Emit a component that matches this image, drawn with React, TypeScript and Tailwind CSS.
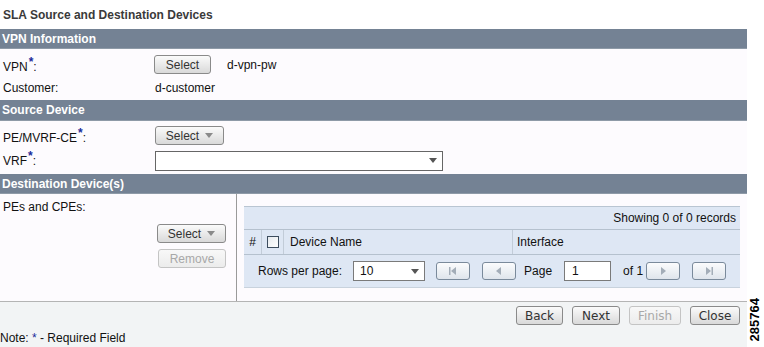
import React from 'react'

const Star: React.FC = () => (
  <span className="relative top-[-5px] ml-[1px] text-[12px] font-bold text-[#1a2a9a]">*</span>
)

const Caret: React.FC = () => (
  <svg width="8" height="5" viewBox="0 0 8 5" className="ml-[6px]">
    <path d="M0 0 L8 0 L4 5 Z" fill="#8a8a8a" />
  </svg>
)

const Btn: React.FC<{ label: string; w: string; caret?: boolean; disabled?: boolean }> = ({
  label,
  w,
  caret,
  disabled,
}) => (
  <div
    className={`flex h-[19px] ${w} items-center justify-center rounded-[3px] border bg-gradient-to-b text-[12px] ${
      disabled
        ? 'border-[#c4c4c4] from-[#f8f8f8] to-[#ececec] text-[#a8a8a8]'
        : 'border-[#8a8a8a] from-[#fbfbfb] to-[#d9d9d9] text-[#333]'
    }`}
  >
    <span>{label}</span>
    {caret && <Caret />}
  </div>
)

const NavBtn: React.FC<{ kind: 'first' | 'prev' | 'next' | 'last' }> = ({ kind }) => (
  <div className="flex h-[18px] w-[34px] items-center justify-center rounded-[3px] border border-[#7a8a9b] bg-gradient-to-b from-[#fbfcfd] to-[#dfe5ec]">
    <svg width="10" height="8" viewBox="0 0 10 8">
      {kind === 'first' && (
        <>
          <rect x="1" y="0" width="1.5" height="8" fill="#a3adb8" />
          <path d="M8 0 L8 8 L3 4 Z" fill="#a3adb8" />
        </>
      )}
      {kind === 'prev' && <path d="M7 0 L7 8 L2 4 Z" fill="#a3adb8" />}
      {kind === 'next' && <path d="M3 0 L3 8 L8 4 Z" fill="#a3adb8" />}
      {kind === 'last' && (
        <>
          <path d="M2 0 L2 8 L7 4 Z" fill="#a3adb8" />
          <rect x="7.5" y="0" width="1.5" height="8" fill="#a3adb8" />
        </>
      )}
    </svg>
  </div>
)

const SectionBar: React.FC<{ title: string; h: string }> = ({ title, h }) => (
  <div
    className={`flex ${h} items-center border-b border-[#8e9aa7] bg-[#748294] pl-[2px] text-[12px] font-bold text-white`}
  >
    {title}
  </div>
)

export default function App() {
  return (
    <div className="relative h-[347px] w-[764px] overflow-hidden bg-white font-['Liberation_Sans',Arial,sans-serif] text-[12px] text-[#111]">
      <div className="h-[29px] pl-[3px] pt-[6px] text-[12px] font-bold text-[#3a3a3a]">
        SLA Source and Destination Devices
      </div>

      <div className="w-[747px]">
        <SectionBar title="VPN Information" h="h-[20px]" />
        <div className="h-[51px] bg-[#fdfbfe]">
          <div className="flex h-[25px] items-end">
            <div className="w-[154px] pl-[3px] leading-[14px]">
              VPN<Star />:
            </div>
            <Btn label="Select" w="w-[57px]" />
            <span className="ml-[16px]">d-vpn-pw</span>
          </div>
          <div className="flex h-[26px] items-center pt-[2px]">
            <div className="w-[155px] pl-[3px]">Customer:</div>
            <span>d-customer</span>
          </div>
        </div>

        <SectionBar title="Source Device" h="h-[21px]" />
        <div className="h-[53px] bg-[#fdfbfe]">
          <div className="flex h-[24px] items-end">
            <div className="w-[155px] pl-[3px] leading-[14px]">
              PE/MVRF-CE<Star />:
            </div>
            <Btn label="Select" w="w-[69px]" caret />
          </div>
          <div className="flex h-[29px] items-center pt-[2px]">
            <div className="w-[155px] pl-[3px] leading-[14px]">
              VRF<Star />:
            </div>
            <div className="flex h-[20px] w-[288px] items-center justify-end border border-[#666] bg-white pr-[5px]">
              <svg width="8" height="5" viewBox="0 0 8 5">
                <path d="M0 0 L8 0 L4 5 Z" fill="#555" />
              </svg>
            </div>
          </div>
        </div>

        <SectionBar title="Destination Device(s)" h="h-[20px]" />
        <div className="flex h-[108px] border-b border-[#b4b4b4] bg-[#fdfbfe]">
          <div className="flex w-[237px] flex-col border-r border-[#9a9a9a]">
            <div className="pl-[3px] pt-[4px]">PEs and CPEs:</div>
            <div className="mt-[8px] flex flex-col items-end gap-[6px] pr-[10px]">
              <Btn label="Select" w="w-[69px]" caret />
              <Btn label="Remove" w="w-[68px]" disabled />
            </div>
          </div>

          <div className="flex-1 pl-[7px] pr-[7px] pt-[12px]">
            <div className="border-t border-[#b9c5d2] bg-[#dee7f4]">
              <div className="flex h-[22px] items-center justify-end pr-[4px]">
                Showing 0 of 0 records
              </div>
              <div className="flex h-[26px] border-y border-[#b5c1ce]">
                <div className="flex w-[18px] items-center justify-center border-r border-[#c2ccd8]">#</div>
                <div className="flex w-[22px] items-center justify-center border-r border-[#c2ccd8]">
                  <div className="h-[12px] w-[12px] border border-[#3d4d5e] bg-gradient-to-br from-[#e6eaee] to-white" />
                </div>
                <div className="flex w-[229px] items-center border-r border-[#c2ccd8] pl-[6px]">Device Name</div>
                <div className="flex flex-1 items-center pl-[4px]">Interface</div>
              </div>
              <div className="flex h-[33px] items-center border-b border-[#c8d2dd] pl-[14px]">
                <span>Rows per page:</span>
                <div className="ml-[11px] flex h-[20px] w-[72px] items-center justify-between border border-[#7a7a7a] bg-white pl-[6px] pr-[5px]">
                  <span>10</span>
                  <svg width="8" height="5" viewBox="0 0 8 5">
                    <path d="M0 0 L8 0 L4 5 Z" fill="#555" />
                  </svg>
                </div>
                <div className="ml-[11px]">
                  <NavBtn kind="first" />
                </div>
                <div className="ml-[12px]">
                  <NavBtn kind="prev" />
                </div>
                <span className="ml-[8px]">Page</span>
                <div className="ml-[12px] flex h-[20px] w-[47px] items-center border border-[#7a7a7a] bg-white pl-[7px]">
                  1
                </div>
                <span className="ml-[12px]">of 1</span>
                <div className="ml-[3px]">
                  <NavBtn kind="next" />
                </div>
                <div className="ml-[12px]">
                  <NavBtn kind="last" />
                </div>
              </div>
            </div>
          </div>
        </div>

        <div className="h-[45px] bg-[#f2f4f5]">
          <div className="flex justify-end gap-[9px] pr-[7px] pt-[4px] font-['DejaVu_Sans',sans-serif] text-[12px]">
            <Btn label="Back" w="w-[47px]" />
            <Btn label="Next" w="w-[48px]" />
            <Btn label="Finish" w="w-[52px]" disabled />
            <Btn label="Close" w="w-[50px]" />
          </div>
          <div className="pt-[6px] text-[12px] leading-[14px]">
            Note: <span className="text-[#1a2a9a]">*</span> - Required Field
          </div>
        </div>
      </div>

      <div className="absolute right-[3px] top-[298px] rotate-180 font-['Liberation_Sans',Arial,sans-serif] text-[13px] font-bold leading-[13px] text-black [writing-mode:vertical-rl]">
        285764
      </div>
    </div>
  )
}
